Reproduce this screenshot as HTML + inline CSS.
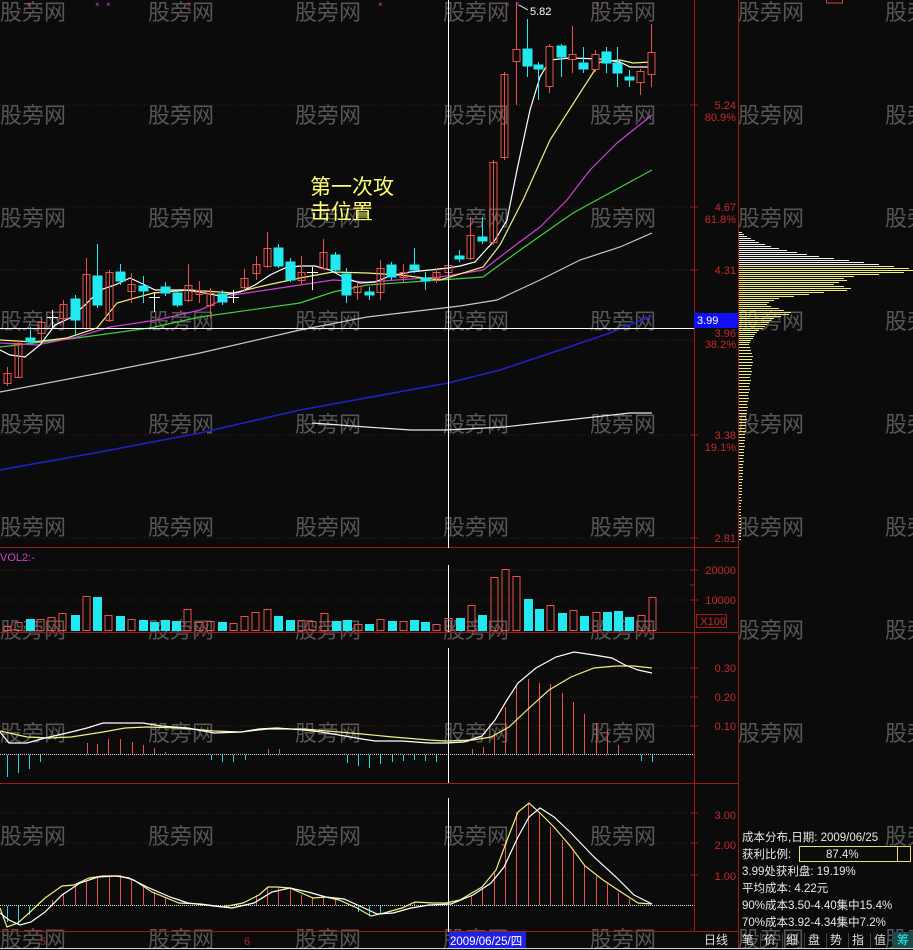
<!DOCTYPE html>
<html><head><meta charset="utf-8"><style>
html,body{margin:0;padding:0;background:#0b0b0b;width:913px;height:950px;overflow:hidden}
svg{display:block}
.wm{fill:#565656;font-family:"Liberation Sans","Noto Sans CJK SC",sans-serif;font-size:22px}
.ax{fill:#c42a2a;font-family:"Liberation Sans",sans-serif;font-size:11px;text-anchor:end}
.info{fill:#e8e8e8;font-family:"Liberation Sans","Noto Sans CJK SC",sans-serif;font-size:11.5px}
.btn{fill:#e0e0e0;font-family:"Liberation Sans","Noto Sans CJK SC",sans-serif;font-size:12px}
</style></head><body>
<svg width="913" height="950" viewBox="0 0 913 950" xmlns="http://www.w3.org/2000/svg">
<rect width="913" height="950" fill="#0b0b0b"/>

<!-- watermarks -->
<g class="wm">
<text x="0" y="20">股旁网</text><text x="148" y="20">股旁网</text><text x="295" y="20">股旁网</text><text x="443" y="20">股旁网</text><text x="590" y="20">股旁网</text><text x="738" y="20">股旁网</text><text x="885" y="20">股旁网</text>
<text x="0" y="123">股旁网</text><text x="148" y="123">股旁网</text><text x="295" y="123">股旁网</text><text x="443" y="123">股旁网</text><text x="590" y="123">股旁网</text><text x="738" y="123">股旁网</text><text x="885" y="123">股旁网</text>
<text x="0" y="226">股旁网</text><text x="148" y="226">股旁网</text><text x="295" y="226">股旁网</text><text x="443" y="226">股旁网</text><text x="590" y="226">股旁网</text><text x="738" y="226">股旁网</text><text x="885" y="226">股旁网</text>
<text x="0" y="329">股旁网</text><text x="148" y="329">股旁网</text><text x="295" y="329">股旁网</text><text x="443" y="329">股旁网</text><text x="590" y="329">股旁网</text><text x="738" y="329">股旁网</text><text x="885" y="329">股旁网</text>
<text x="0" y="432">股旁网</text><text x="148" y="432">股旁网</text><text x="295" y="432">股旁网</text><text x="443" y="432">股旁网</text><text x="590" y="432">股旁网</text><text x="738" y="432">股旁网</text><text x="885" y="432">股旁网</text>
<text x="0" y="535">股旁网</text><text x="148" y="535">股旁网</text><text x="295" y="535">股旁网</text><text x="443" y="535">股旁网</text><text x="590" y="535">股旁网</text><text x="738" y="535">股旁网</text><text x="885" y="535">股旁网</text>
<text x="0" y="638">股旁网</text><text x="148" y="638">股旁网</text><text x="295" y="638">股旁网</text><text x="443" y="638">股旁网</text><text x="590" y="638">股旁网</text><text x="738" y="638">股旁网</text><text x="885" y="638">股旁网</text>
<text x="0" y="741">股旁网</text><text x="148" y="741">股旁网</text><text x="295" y="741">股旁网</text><text x="443" y="741">股旁网</text><text x="590" y="741">股旁网</text><text x="738" y="741">股旁网</text><text x="885" y="741">股旁网</text>
<text x="0" y="844">股旁网</text><text x="148" y="844">股旁网</text><text x="295" y="844">股旁网</text><text x="443" y="844">股旁网</text><text x="590" y="844">股旁网</text><text x="885" y="844">股旁网</text>
<text x="0" y="947">股旁网</text><text x="148" y="947">股旁网</text><text x="295" y="947">股旁网</text><text x="443" y="947">股旁网</text><text x="590" y="947">股旁网</text><text x="738" y="947">股旁网</text><text x="885" y="947">股旁网</text>
</g>

<!-- grid dotted lines -->
<g stroke="#5a1515" stroke-width="1" stroke-dasharray="1,2">
<line x1="0" y1="105" x2="694" y2="105"/><line x1="0" y1="207" x2="694" y2="207"/><line x1="0" y1="270" x2="694" y2="270"/>
<line x1="0" y1="340" x2="694" y2="340"/><line x1="0" y1="435" x2="694" y2="435"/><line x1="0" y1="538" x2="694" y2="538"/>
<line x1="0" y1="570" x2="694" y2="570"/><line x1="0" y1="600" x2="694" y2="600"/>
<line x1="0" y1="668" x2="694" y2="668"/><line x1="0" y1="697" x2="694" y2="697"/><line x1="0" y1="726" x2="694" y2="726"/>
<line x1="0" y1="813" x2="694" y2="813"/><line x1="0" y1="843" x2="694" y2="843"/><line x1="0" y1="875" x2="694" y2="875"/>
</g>

<!-- panel frame -->
<g stroke="#a01818" stroke-width="1" fill="none">
<line x1="694.5" y1="0" x2="694.5" y2="932"/>
<line x1="738.5" y1="0" x2="738.5" y2="932"/>
<line x1="0" y1="547.5" x2="738" y2="547.5"/>
<line x1="0" y1="632.5" x2="738" y2="632.5"/>
<line x1="0" y1="783.5" x2="738" y2="783.5"/>
<line x1="0" y1="931.5" x2="738" y2="931.5"/>
</g>
<!-- axis ticks -->
<g stroke="#a01818">
<line x1="690" y1="105" x2="698" y2="105"/><line x1="690" y1="207" x2="698" y2="207"/><line x1="690" y1="270" x2="698" y2="270"/><line x1="690" y1="435" x2="698" y2="435"/><line x1="690" y1="538" x2="698" y2="538"/>
<line x1="690" y1="570" x2="698" y2="570"/><line x1="690" y1="600" x2="698" y2="600"/><line x1="690" y1="585" x2="694" y2="585"/>
<line x1="690" y1="668" x2="698" y2="668"/><line x1="690" y1="697" x2="698" y2="697"/><line x1="690" y1="726" x2="698" y2="726"/>
<line x1="690" y1="813" x2="698" y2="813"/><line x1="690" y1="843" x2="698" y2="843"/><line x1="690" y1="875" x2="698" y2="875"/>
</g>

<!-- axis labels -->
<g class="ax">
<text x="736" y="109">5.24</text><text x="736" y="121">80.9%</text>
<text x="736" y="211">4.67</text><text x="736" y="223">61.8%</text>
<text x="736" y="274">4.31</text>
<text x="736" y="337">3.96</text><text x="736" y="348">38.2%</text>
<text x="736" y="439">3.38</text><text x="736" y="451">19.1%</text>
<text x="736" y="542">2.81</text>
<text x="736" y="574">20000</text><text x="736" y="604">10000</text>
<text x="726" y="625">X100</text>
<text x="736" y="672">0.30</text><text x="736" y="701">0.20</text><text x="736" y="730">0.10</text>
<text x="736" y="819">3.00</text><text x="736" y="849">2.00</text><text x="736" y="880">1.00</text>
</g>
<rect x="696.5" y="614.5" width="30" height="13" fill="none" stroke="#a01818"/>

<!-- chip distribution -->
<path stroke="#f2f2f2" stroke-width="1" fill="none" d="M739 232.5h3M739 234.5h5M739 236.5h8M739 238.5h12M739 240.5h16M739 242.5h20M739 244.5h26M739 246.5h32M739 248.5h40M739 250.5h48M739 252.5h58M739 254.5h68M739 256.5h80M739 258.5h95M739 260.5h110M739 262.5h125M739 264.5h140"/>
<path stroke="#f0ee78" stroke-width="1" fill="none" d="M739 266.5h155M739 268.5h170M739 270.5h175M739 272.5h165M739 274.5h140M739 276.5h115M739 278.5h105M739 280.5h108M739 282.5h100M739 284.5h95M739 286.5h105M739 288.5h112M739 290.5h108M739 292.5h85M739 294.5h70M739 296.5h55M739 298.5h40M739 300.5h35M739 302.5h30M739 304.5h28M739 306.5h32M739 308.5h40M739 310.5h45M739 312.5h52M739 314.5h50M739 316.5h42M739 318.5h35M739 320.5h32M739 322.5h30M739 324.5h28M739 326.5h26M739 328.5h24M739 330.5h20M739 332.5h18M739 334.5h16M739 336.5h15M739 338.5h14M739 340.5h12M739 342.5h11M739 344.5h10M739 347.5h11M739 350.5h12M739 353.5h13M739 356.5h14M739 359.5h13M739 362.5h14M739 365.5h13M739 368.5h12M739 371.5h13M739 374.5h12M739 377.5h11M739 380.5h12M739 383.5h11M739 386.5h10M739 389.5h11M739 392.5h10M739 395.5h9M739 398.5h10M739 401.5h9M739 404.5h8M739 407.5h9M739 410.5h8M739 413.5h8M739 416.5h7M739 419.5h8M739 422.5h7M739 425.5h7M739 428.5h6M739 431.5h7M739 434.5h6M739 437.5h6M739 440.5h6M739 443.5h5M739 446.5h6M739 449.5h5M739 452.5h5M739 455.5h5M739 458.5h4M739 461.5h5M739 464.5h4M739 467.5h4M739 470.5h4M739 473.5h4M739 476.5h3M739 479.5h4M739 482.5h3M739 485.5h3M739 488.5h3M739 491.5h3M739 494.5h3M739 497.5h2M739 500.5h3M739 503.5h2M739 506.5h2M739 509.5h2M739 512.5h2M739 515.5h2M739 518.5h2M739 521.5h2M739 524.5h2M739 527.5h2M739 530.5h2M739 533.5h2M739 536.5h2M739 539.5h2"/>

<!-- moving averages -->
<g fill="none" stroke-width="1.2">
<polyline stroke="#2020c8" stroke-width="1.6" points="0,470 100,452 200,433 300,410 355,400 448,383 500,370 560,350 610,333 652,316"/>
<polyline stroke="#e8e8e8" points="312,423 340,425 366,427 411,430 446,430 504,427 558,421 603,416 630,413 652,413"/>
<polyline stroke="#c8c8c8" points="0,392 100,373 200,353 300,330 367,317 460,306 497,300 540,280 580,260 620,247 652,233"/>
<polyline stroke="#40d040" points="0,347 77,338 150,328 200,317 300,303 333,292 367,285 440,280 483,277 523,248 573,213 652,170"/>
<polyline stroke="#d040d0" points="0,343 37,345 77,337 110,327 157,320 200,310 233,295 267,290 300,285 333,280 367,282 440,277 483,270 513,247 540,227 567,200 590,170 617,143 652,115"/>
<polyline stroke="#f0f080" points="0,340 33,342 67,338 97,328 117,303 153,293 190,290 233,293 267,285 300,278 333,272 367,273 400,275 440,280 483,267 500,245 523,200 550,140 580,93 600,62 620,60 633,63 652,62"/>
<polyline stroke="#ffffff" points="0,350 10,355 25,357 40,345 55,325 70,318 85,305 100,290 115,285 130,278 145,285 155,290 170,290 185,290 200,292 220,296 240,292 255,285 270,275 285,268 300,266 315,266 330,270 345,278 360,283 375,282 390,276 410,272 430,270 448,268 460,266 475,262 483,253 495,240 507,220 517,170 530,110 540,77 550,60 570,58 600,59 620,62 630,67 652,67"/>
</g>

<!-- candles -->
<g stroke-width="1">
<g stroke="#e8524a" fill="none">
<line x1="7.5" y1="367" x2="7.5" y2="386"/><rect x="4" y="373.5" width="7" height="10"/>
<line x1="18.5" y1="340" x2="18.5" y2="377"/><rect x="15" y="343.5" width="7" height="34"/>
<line x1="41.5" y1="317" x2="41.5" y2="340"/><rect x="38" y="322.5" width="7" height="11"/>
<line x1="63.5" y1="300" x2="63.5" y2="325"/><rect x="60" y="304.5" width="7" height="14"/>
<line x1="86.5" y1="258" x2="86.5" y2="330"/><rect x="83" y="274.5" width="7" height="54"/>
<line x1="109.5" y1="270" x2="109.5" y2="322"/><rect x="106" y="272.5" width="7" height="48"/>
<line x1="131.5" y1="273" x2="131.5" y2="303"/><rect x="128" y="284.5" width="7" height="7"/>
<line x1="188.5" y1="264" x2="188.5" y2="302"/><rect x="185" y="285.5" width="7" height="15"/>
<line x1="199.5" y1="281" x2="199.5" y2="303"/><rect x="196" y="290.5" width="7" height="4"/>
<line x1="210.5" y1="288" x2="210.5" y2="318"/><rect x="207" y="293.5" width="7" height="12"/>
<line x1="244.5" y1="269" x2="244.5" y2="292"/><rect x="241" y="278.5" width="7" height="9"/>
<line x1="256.5" y1="256" x2="256.5" y2="280"/><rect x="253" y="264.5" width="7" height="9"/>
<line x1="267.5" y1="232" x2="267.5" y2="268"/><rect x="264" y="248.5" width="7" height="18"/>
<line x1="301.5" y1="256" x2="301.5" y2="285"/><rect x="298" y="272.5" width="7" height="8"/>
<line x1="323.5" y1="239" x2="323.5" y2="270"/><rect x="320" y="252.5" width="7" height="16"/>
<line x1="357.5" y1="282" x2="357.5" y2="300"/><rect x="354" y="286.5" width="7" height="6"/>
<line x1="380.5" y1="260" x2="380.5" y2="300"/><rect x="377" y="268.5" width="7" height="24"/>
<line x1="403.5" y1="264" x2="403.5" y2="282"/><rect x="400" y="272.5" width="7" height="5"/>
<line x1="436.5" y1="268" x2="436.5" y2="283"/><rect x="433" y="272.5" width="7" height="6"/>
<line x1="448.5" y1="262" x2="448.5" y2="275"/><rect x="445" y="265.5" width="7" height="7"/>
<line x1="470.5" y1="217" x2="470.5" y2="260"/><rect x="467" y="235.5" width="7" height="23"/>
<line x1="493.5" y1="160" x2="493.5" y2="245"/><rect x="490" y="162.5" width="7" height="80"/>
<line x1="504.5" y1="72" x2="504.5" y2="160"/><rect x="501" y="74.5" width="7" height="83"/>
<line x1="516.5" y1="2" x2="516.5" y2="105"/><rect x="513" y="49.5" width="7" height="12" fill="#0b0b0b"/>
<line x1="549.5" y1="44" x2="549.5" y2="93"/><rect x="546" y="46.5" width="7" height="40" fill="#0b0b0b"/>
<line x1="572.5" y1="26" x2="572.5" y2="73"/><rect x="569" y="54.5" width="7" height="5" fill="#0b0b0b"/>
<line x1="595.5" y1="50" x2="595.5" y2="72"/><rect x="592" y="54.5" width="7" height="15" fill="#0b0b0b"/>
<line x1="640.5" y1="69" x2="640.5" y2="95"/><rect x="637" y="71.5" width="7" height="11" fill="#0b0b0b"/>
<line x1="651.5" y1="24" x2="651.5" y2="87"/><rect x="648" y="52.5" width="7" height="22" fill="#0b0b0b"/>
</g>
<g stroke="#22e8f0" fill="#22e8f0">
<line x1="30.5" y1="327" x2="30.5" y2="343"/><rect x="26" y="338" width="9" height="4"/>
<line x1="75.5" y1="295" x2="75.5" y2="335"/><rect x="71" y="299" width="9" height="21"/>
<line x1="97.5" y1="244" x2="97.5" y2="308"/><rect x="93" y="276" width="9" height="29"/>
<line x1="120.5" y1="264" x2="120.5" y2="285"/><rect x="116" y="272" width="9" height="9"/>
<line x1="143.5" y1="276" x2="143.5" y2="303"/><rect x="139" y="286" width="9" height="5"/>
<line x1="165.5" y1="282" x2="165.5" y2="296"/><rect x="161" y="287" width="9" height="6"/>
<line x1="177.5" y1="290" x2="177.5" y2="307"/><rect x="173" y="293" width="9" height="12"/>
<line x1="222.5" y1="290" x2="222.5" y2="305"/><rect x="218" y="294" width="9" height="8"/>
<line x1="278.5" y1="244" x2="278.5" y2="268"/><rect x="274" y="248" width="9" height="18"/>
<line x1="290.5" y1="258" x2="290.5" y2="282"/><rect x="286" y="262" width="9" height="18"/>
<line x1="335.5" y1="252" x2="335.5" y2="272"/><rect x="331" y="255" width="9" height="15"/>
<line x1="346.5" y1="268" x2="346.5" y2="303"/><rect x="342" y="274" width="9" height="21"/>
<line x1="369.5" y1="287" x2="369.5" y2="300"/><rect x="365" y="292" width="9" height="3"/>
<line x1="391.5" y1="262" x2="391.5" y2="280"/><rect x="387" y="265" width="9" height="12"/>
<line x1="414.5" y1="248" x2="414.5" y2="273"/><rect x="410" y="265" width="9" height="5"/>
<line x1="425.5" y1="272" x2="425.5" y2="290"/><rect x="421" y="278" width="9" height="3"/>
<line x1="459.5" y1="250" x2="459.5" y2="262"/><rect x="455" y="256" width="9" height="3"/>
<line x1="482.5" y1="217" x2="482.5" y2="244"/><rect x="478" y="237" width="9" height="4"/>
<line x1="527.5" y1="19" x2="527.5" y2="77"/><rect x="523" y="49" width="9" height="17"/>
<line x1="538.5" y1="62" x2="538.5" y2="100"/><rect x="534" y="65" width="9" height="4"/>
<line x1="561.5" y1="44" x2="561.5" y2="77"/><rect x="557" y="46" width="9" height="11"/>
<line x1="583.5" y1="47" x2="583.5" y2="73"/><rect x="579" y="63" width="9" height="6"/>
<line x1="606.5" y1="47" x2="606.5" y2="73"/><rect x="602" y="52" width="9" height="11"/>
<line x1="617.5" y1="47" x2="617.5" y2="87"/><rect x="613" y="63" width="9" height="10"/>
<line x1="629.5" y1="70" x2="629.5" y2="87"/><rect x="625" y="77" width="9" height="3"/>
</g>
<g stroke="#ffffff">
<line x1="52.5" y1="310" x2="52.5" y2="328"/><line x1="47" y1="317.5" x2="58" y2="317.5"/>
<line x1="154.5" y1="292" x2="154.5" y2="312"/><line x1="149" y1="297.5" x2="160" y2="297.5"/>
<line x1="233.5" y1="290" x2="233.5" y2="303"/><line x1="228" y1="297.5" x2="239" y2="297.5"/>
<line x1="312.5" y1="267" x2="312.5" y2="290"/><line x1="307" y1="272.5" x2="318" y2="272.5"/>
</g>
</g>

<!-- top markers -->
<g fill="#d040d0" font-family="Liberation Sans,sans-serif" font-size="8">
<text x="27" y="7">×</text><text x="95" y="7">×</text><text x="106" y="7">×</text><text x="187" y="7">×</text><text x="378" y="7">×</text><text x="505" y="7">×</text><text x="515" y="7">×</text><text x="595" y="7">×</text>
</g>
<line x1="519" y1="5" x2="528" y2="10" stroke="#ffffff"/>
<text x="530" y="15" fill="#ffffff" font-family="Liberation Sans,sans-serif" font-size="11">5.82</text>
<rect x="826.5" y="-1" width="16" height="4" fill="none" stroke="#e04040"/>

<!-- annotation -->
<text x="310" y="194" fill="#ffff70" font-family="Liberation Sans,'Noto Sans CJK SC',sans-serif" font-size="21">第一次攻</text>
<text x="310" y="219" fill="#ffff70" font-family="Liberation Sans,'Noto Sans CJK SC',sans-serif" font-size="21">击位置</text>

<!-- crosshair -->
<line x1="0" y1="328.5" x2="694" y2="328.5" stroke="#ffffff"/>
<line x1="448.5" y1="0" x2="448.5" y2="548" stroke="#ffffff"/>
<line x1="448.5" y1="565" x2="448.5" y2="632" stroke="#ffffff"/>
<line x1="448.5" y1="648" x2="448.5" y2="783" stroke="#ffffff"/>
<line x1="448.5" y1="798" x2="448.5" y2="932" stroke="#ffffff"/>
<rect x="694" y="313" width="44" height="15" fill="#1010f0"/>
<text x="697" y="324" fill="#ffffff" font-family="Liberation Sans,sans-serif" font-size="11">3.99</text>

<!-- volume -->
<text x="0" y="561" fill="#d040d0" font-family="Liberation Sans,sans-serif" font-size="11">VOL2:-</text>
<g stroke="#e8524a" fill="none">
<rect x="4" y="626.5" width="7" height="4"/><rect x="15" y="622.5" width="7" height="8"/><rect x="37" y="619.5" width="7" height="11"/><rect x="48" y="617.5" width="7" height="13"/><rect x="59" y="613.5" width="7" height="17"/><rect x="83" y="596.5" width="7" height="34"/><rect x="105" y="615.5" width="7" height="15"/><rect x="128" y="619.5" width="7" height="11"/><rect x="184" y="609.5" width="7" height="21"/><rect x="196" y="622.5" width="7" height="8"/><rect x="207" y="621.5" width="7" height="9"/><rect x="230" y="623.5" width="7" height="7"/><rect x="241" y="616.5" width="7" height="14"/><rect x="252" y="612.5" width="7" height="18"/><rect x="264" y="609.5" width="7" height="21"/><rect x="298" y="620.5" width="7" height="10"/><rect x="309" y="621.5" width="7" height="9"/><rect x="321" y="613.5" width="7" height="17"/><rect x="355" y="624.5" width="7" height="6"/><rect x="377" y="619.5" width="7" height="11"/><rect x="400" y="621.5" width="7" height="9"/><rect x="433" y="624.5" width="7" height="6"/><rect x="445" y="618.5" width="7" height="12"/><rect x="468" y="605.5" width="7" height="25"/><rect x="491" y="577.5" width="7" height="53"/><rect x="502" y="569.5" width="7" height="61"/><rect x="513" y="576.5" width="7" height="54"/><rect x="547" y="605.5" width="7" height="25"/><rect x="570" y="610.5" width="7" height="20"/><rect x="593" y="612.5" width="7" height="18"/><rect x="638" y="615.5" width="7" height="15"/><rect x="649" y="597.5" width="7" height="33"/>
</g>
<g fill="#22e8f0">
<rect x="26" y="619" width="9" height="12"/><rect x="71" y="615" width="9" height="16"/><rect x="93" y="597" width="9" height="34"/><rect x="116" y="616" width="9" height="15"/><rect x="139" y="620" width="9" height="11"/><rect x="150" y="622" width="9" height="9"/><rect x="161" y="620" width="9" height="11"/><rect x="172" y="621" width="9" height="10"/><rect x="218" y="622" width="9" height="9"/><rect x="274" y="616" width="9" height="15"/><rect x="286" y="620" width="9" height="11"/><rect x="332" y="621" width="9" height="10"/><rect x="343" y="620" width="9" height="11"/><rect x="365" y="624" width="9" height="7"/><rect x="388" y="621" width="9" height="10"/><rect x="410" y="620" width="9" height="11"/><rect x="421" y="622" width="9" height="9"/><rect x="456" y="618" width="9" height="13"/><rect x="478" y="615" width="9" height="16"/><rect x="524" y="599" width="9" height="32"/><rect x="535" y="609" width="9" height="22"/><rect x="558" y="613" width="9" height="18"/><rect x="580" y="616" width="9" height="15"/><rect x="603" y="612" width="9" height="19"/><rect x="614" y="611" width="9" height="20"/><rect x="625" y="617" width="9" height="14"/>
</g>

<!-- MACD -->
<line x1="0" y1="754.5" x2="694" y2="754.5" stroke="#e0e0e0" stroke-dasharray="1,1"/>
<g stroke="#e8524a">
<line x1="87.5" y1="754" x2="87.5" y2="743"/><line x1="97.5" y1="754" x2="97.5" y2="744"/><line x1="108.5" y1="754" x2="108.5" y2="739"/><line x1="120.5" y1="754" x2="120.5" y2="739"/><line x1="132.5" y1="754" x2="132.5" y2="742"/><line x1="143.5" y1="754" x2="143.5" y2="745"/><line x1="154.5" y1="754" x2="154.5" y2="748"/><line x1="165.5" y1="754" x2="165.5" y2="752"/><line x1="268.5" y1="754" x2="268.5" y2="749"/><line x1="279.5" y1="754" x2="279.5" y2="749"/>
<line x1="472.5" y1="754" x2="472.5" y2="749"/><line x1="483.5" y1="754" x2="483.5" y2="747"/><line x1="494.5" y1="754" x2="494.5" y2="733"/><line x1="505.5" y1="754" x2="505.5" y2="707"/><line x1="516.5" y1="754" x2="516.5" y2="685"/><line x1="528.5" y1="754" x2="528.5" y2="679"/><line x1="539.5" y1="754" x2="539.5" y2="683"/><line x1="550.5" y1="754" x2="550.5" y2="684"/><line x1="562.5" y1="754" x2="562.5" y2="693"/><line x1="573.5" y1="754" x2="573.5" y2="702"/><line x1="584.5" y1="754" x2="584.5" y2="714"/><line x1="596.5" y1="754" x2="596.5" y2="723"/><line x1="607.5" y1="754" x2="607.5" y2="730"/><line x1="618.5" y1="754" x2="618.5" y2="745"/>
</g>
<g stroke="#22d8e0">
<line x1="7.5" y1="755" x2="7.5" y2="777"/><line x1="18.5" y1="755" x2="18.5" y2="773"/><line x1="29.5" y1="755" x2="29.5" y2="769"/><line x1="40.5" y1="755" x2="40.5" y2="762"/>
<line x1="211.5" y1="755" x2="211.5" y2="760"/><line x1="222.5" y1="755" x2="222.5" y2="762"/><line x1="233.5" y1="755" x2="233.5" y2="762"/><line x1="245.5" y1="755" x2="245.5" y2="760"/>
<line x1="347.5" y1="755" x2="347.5" y2="763"/><line x1="358.5" y1="755" x2="358.5" y2="766"/><line x1="369.5" y1="755" x2="369.5" y2="768"/><line x1="380.5" y1="755" x2="380.5" y2="764"/><line x1="392.5" y1="755" x2="392.5" y2="762"/><line x1="403.5" y1="755" x2="403.5" y2="761"/><line x1="414.5" y1="755" x2="414.5" y2="760"/><line x1="425.5" y1="755" x2="425.5" y2="761"/><line x1="436.5" y1="755" x2="436.5" y2="762"/>
<line x1="641.5" y1="755" x2="641.5" y2="761"/><line x1="652.5" y1="755" x2="652.5" y2="762"/>
</g>
<g fill="none" stroke-width="1.2">
<polyline stroke="#f0f080" points="0,731 27,737 49,738 71,737 103,732 125,728 147,727 179,728 214,731 241,732 268,729 304,729 339,732 362,734 393,737 429,740 446,741 473,740 491,737 509,727 527,710 549,690 571,677 594,668 616,666 634,666 652,668"/>
<polyline stroke="#ffffff" points="0,732 9,743 27,743 45,738 67,733 87,728 103,723 118,723 143,723 161,726 188,728 214,733 241,732 259,729 277,728 304,730 321,732 339,735 362,739 375,741 402,741 429,743 446,743 464,742 482,736 495,720 507,700 518,683 536,668 556,657 574,652 594,655 612,658 625,665 638,670 652,673"/>
</g>

<!-- KDJ -->
<line x1="0" y1="905.5" x2="694" y2="905.5" stroke="#e0e0e0" stroke-dasharray="1,1"/>
<g stroke="#e8524a">
<line x1="52.5" y1="905" x2="52.5" y2="900"/><line x1="63.5" y1="905" x2="63.5" y2="893"/><line x1="75.5" y1="905" x2="75.5" y2="886"/><line x1="86.5" y1="905" x2="86.5" y2="881"/><line x1="97.5" y1="905" x2="97.5" y2="878"/><line x1="109.5" y1="905" x2="109.5" y2="876"/><line x1="120.5" y1="905" x2="120.5" y2="876"/><line x1="131.5" y1="905" x2="131.5" y2="879"/><line x1="143.5" y1="905" x2="143.5" y2="885"/><line x1="154.5" y1="905" x2="154.5" y2="892"/><line x1="165.5" y1="905" x2="165.5" y2="898"/>
<line x1="256.5" y1="905" x2="256.5" y2="895"/><line x1="267.5" y1="905" x2="267.5" y2="887"/><line x1="278.5" y1="905" x2="278.5" y2="887"/><line x1="290.5" y1="905" x2="290.5" y2="888"/><line x1="301.5" y1="905" x2="301.5" y2="895"/><line x1="312.5" y1="905" x2="312.5" y2="898"/><line x1="323.5" y1="905" x2="323.5" y2="897"/><line x1="335.5" y1="905" x2="335.5" y2="899"/>
<line x1="414.5" y1="905" x2="414.5" y2="902"/><line x1="471.5" y1="905" x2="471.5" y2="895"/><line x1="482.5" y1="905" x2="482.5" y2="889"/><line x1="494.5" y1="905" x2="494.5" y2="871"/><line x1="505.5" y1="905" x2="505.5" y2="840"/><line x1="516.5" y1="905" x2="516.5" y2="812"/><line x1="528.5" y1="905" x2="528.5" y2="803"/><line x1="539.5" y1="905" x2="539.5" y2="813"/><line x1="550.5" y1="905" x2="550.5" y2="827"/><line x1="562.5" y1="905" x2="562.5" y2="840"/><line x1="573.5" y1="905" x2="573.5" y2="852"/><line x1="584.5" y1="905" x2="584.5" y2="866"/><line x1="596.5" y1="905" x2="596.5" y2="876"/><line x1="607.5" y1="905" x2="607.5" y2="884"/><line x1="618.5" y1="905" x2="618.5" y2="893"/><line x1="629.5" y1="905" x2="629.5" y2="899"/>
</g>
<g stroke="#22d8e0">
<line x1="7.5" y1="906" x2="7.5" y2="922"/><line x1="18.5" y1="906" x2="18.5" y2="925"/><line x1="29.5" y1="906" x2="29.5" y2="915"/>
<line x1="358.5" y1="906" x2="358.5" y2="912"/><line x1="369.5" y1="906" x2="369.5" y2="916"/><line x1="380.5" y1="906" x2="380.5" y2="913"/>
</g>
<g fill="none" stroke-width="1.2">
<polyline stroke="#f0f080" points="0,908 7,927 18,923 29,913 45,898 62,886 74,885 89,878 103,876 120,876 134,880 152,892 179,903 201,904 223,907 243,903 259,895 268,887 277,887 290,888 313,898 326,897 339,900 357,908 371,916 384,913 402,908 415,902 433,903 446,903 460,900 482,887 496,870 509,835 518,812 529,803 540,813 554,827 571,847 585,866 603,880 621,892 638,903 652,904"/>
<polyline stroke="#ffffff" points="0,913 9,920 20,925 31,922 45,912 62,895 80,883 98,877 116,876 129,878 147,887 170,897 188,903 214,906 232,908 254,903 272,892 290,888 308,892 326,897 344,899 362,907 377,914 393,913 411,908 429,905 451,904 473,895 491,883 504,867 518,837 529,817 540,808 554,817 571,833 594,857 616,877 634,895 652,904"/>
</g>

<!-- bottom bar -->
<text x="40" y="945" fill="#b02020" font-family="Liberation Sans,sans-serif" font-size="11">5</text>
<text x="244" y="945" fill="#b02020" font-family="Liberation Sans,sans-serif" font-size="11">6</text>
<rect x="449" y="932" width="77" height="16" fill="#2020e0"/>
<text x="450" y="945" fill="#ffffff" font-family="Liberation Sans,'Noto Sans CJK SC',sans-serif" font-size="11.5">2009/06/25/四</text>
<line x1="0" y1="948.5" x2="913" y2="948.5" stroke="#d0d0d0"/>
<text x="704" y="944" class="btn">日线</text>
<g stroke="#a01818"><line x1="738.5" y1="932" x2="738.5" y2="948"/></g>
<g class="btn">
<text x="742" y="944">笔</text><text x="764" y="944">价</text><text x="786" y="944">细</text><text x="808" y="944">盘</text><text x="830" y="944">势</text><text x="852" y="944">指</text><text x="874" y="944">值</text>
</g>
<rect x="893" y="932" width="20" height="16" fill="#1a4a4a"/>
<text x="897" y="944" fill="#30e8e8" font-family="Liberation Sans,'Noto Sans CJK SC',sans-serif" font-size="12">筹</text>
<g stroke="#404040"><line x1="760.5" y1="933" x2="760.5" y2="948"/><line x1="782.5" y1="933" x2="782.5" y2="948"/><line x1="804.5" y1="933" x2="804.5" y2="948"/><line x1="826.5" y1="933" x2="826.5" y2="948"/><line x1="848.5" y1="933" x2="848.5" y2="948"/><line x1="870.5" y1="933" x2="870.5" y2="948"/><line x1="892.5" y1="933" x2="892.5" y2="948"/></g>

<!-- chip info -->
<g class="info">
<text x="742" y="841">成本分布,日期: 2009/06/25</text>
<text x="742" y="858">获利比例:</text>
<text x="742" y="875">3.99处获利盘: 19.19%</text>
<text x="742" y="892">平均成本: 4.22元</text>
<text x="742" y="909">90%成本3.50-4.40集中15.4%</text>
<text x="742" y="926">70%成本3.92-4.34集中7.2%</text>
<text x="826" y="858">87.4%</text>
</g>
<rect x="799.5" y="846.5" width="98" height="15" fill="none" stroke="#e8e070"/>
<rect x="897.5" y="846.5" width="13" height="15" fill="none" stroke="#e8e070"/>
</svg>
</body></html>
